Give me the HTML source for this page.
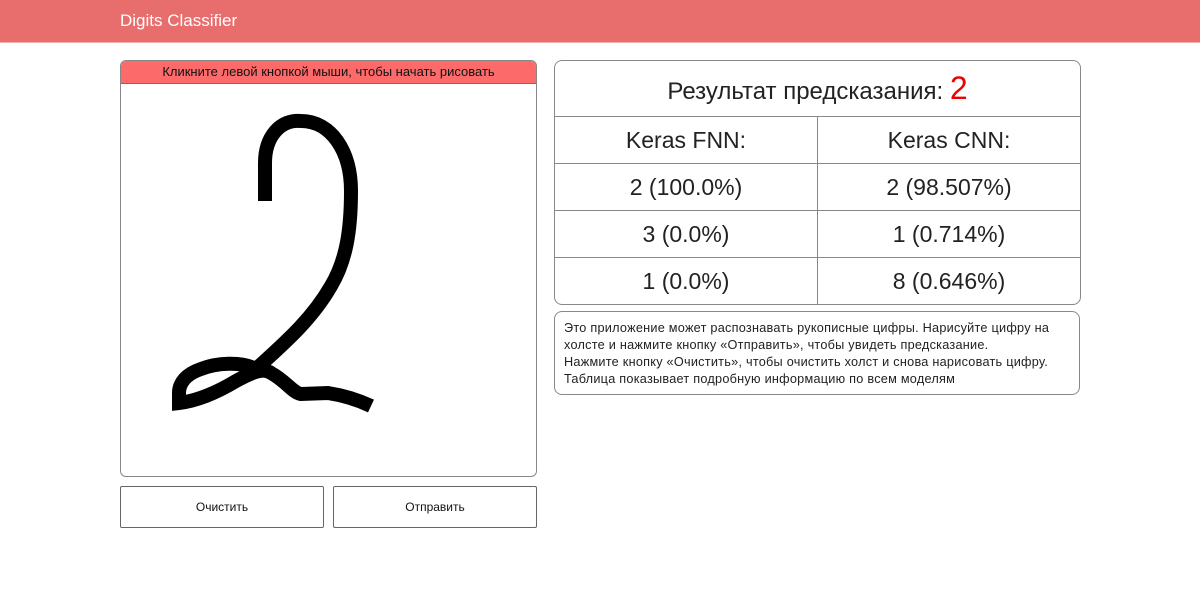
<!DOCTYPE html>
<html><head><meta charset="utf-8"><style>
body{margin:0;width:1200px;height:614px;background:#fff;font-family:"Liberation Sans",sans-serif;position:relative;overflow:hidden;color:#111}
.nav{position:absolute;left:0;top:0;width:1200px;height:42px;background:#e86d6d;border-bottom:1px solid #f0b0b0}
.nav span{position:absolute;left:120px;top:11px;color:#fff;font-size:17px}
.canvas{position:absolute;left:120px;top:60px;width:415px;height:415px;border:1px solid #888;border-radius:6px;overflow:hidden}
.canvas .hd{height:22px;background:#fd6a6a;border-bottom:1px solid #e35;text-align:center;font-size:13px;line-height:22px;color:#111}
.btn{position:absolute;top:486px;height:40px;border:1px solid #666;border-radius:2px;text-align:center;line-height:40px;font-size:12px}
table{position:absolute;left:554px;top:60px;width:527px;border-collapse:separate;border-spacing:0;border:1px solid #888;border-radius:8px;font-size:23px;color:#222}
td{text-align:center;border-top:1px solid #888;height:46px;padding:0}
tr:first-child td{border-top:none;height:55px;font-size:24px}
td+td{border-left:1px solid #888}
.info{position:absolute;left:554px;top:311px;width:495px;height:66px;border:1px solid #888;border-radius:8px;padding:8px 20px 8px 9px;font-size:12.7px;line-height:17px;color:#222;letter-spacing:0.25px;white-space:nowrap}
</style></head><body>
<div class="nav"><span>Digits Classifier</span></div>
<div class="canvas"><div class="hd">Кликните левой кнопкой мыши, чтобы начать рисовать</div>
<svg width="415" height="395" style="position:absolute;left:0;top:22px">
<g transform="translate(-120,-82)" fill="none" stroke="#000" stroke-width="14" stroke-linejoin="miter">
<path d="M264 200 L264 162 C264 135 280 118 300 120 C330 120 350 150 350 190 C350 230 345 260 330 285 C310 320 280 345 255 368"/>
<path d="M255 368 C240 360 215 362 200 368 C185 373 178 382 178 392 L178 402 C195 400 215 392 235 380 C250 372 262 366 270 372 C285 380 292 392 300 393 L327 392 C340 394 355 398 370 405"/>
</g></svg>
</div>
<div class="btn" style="left:120px;width:202px">Очистить</div>
<div class="btn" style="left:333px;width:202px">Отправить</div>
<table>
<tr><td colspan="2">Результат предсказания: <span style="color:#e00;font-size:32px">2</span></td></tr>
<tr><td style="width:262px">Keras FNN:</td><td>Keras CNN:</td></tr>
<tr><td>2 (100.0%)</td><td>2 (98.507%)</td></tr>
<tr><td>3 (0.0%)</td><td>1 (0.714%)</td></tr>
<tr><td>1 (0.0%)</td><td>8 (0.646%)</td></tr>
</table>
<div class="info">Это приложение может распознавать рукописные цифры. Нарисуйте цифру на<br>холсте и нажмите кнопку «Отправить», чтобы увидеть предсказание.<br>Нажмите кнопку «Очистить», чтобы очистить холст и снова нарисовать цифру.<br>Таблица показывает подробную информацию по всем моделям</div>
</body></html>
